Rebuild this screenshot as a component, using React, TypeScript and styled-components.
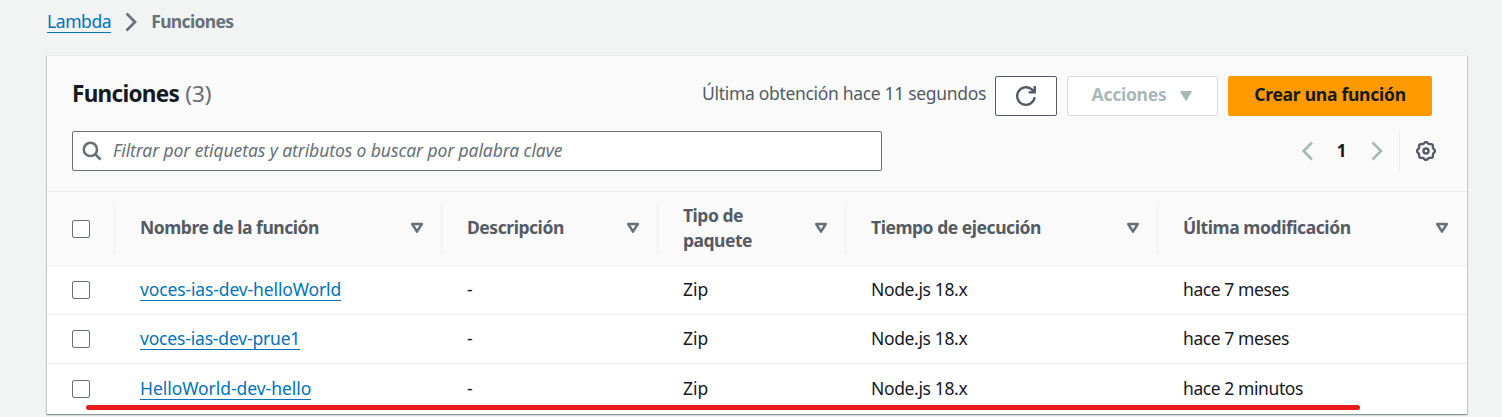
import React from 'react';
import styled, { createGlobalStyle } from 'styled-components';

const GlobalStyle = createGlobalStyle`
  *, *::before, *::after { box-sizing: border-box; }
  html, body { margin: 0; height: 417px; overflow: hidden; background: #f2f4f4; }
  body {
    font-family: "Noto Sans", "Open Sans", sans-serif;
    font-size: 17.5px;
    line-height: 25px;
    color: #16191f;
  }
  svg { display: block; flex: none; }
`;

const Page = styled.main`
  height: 417px;
  padding: 9px 35px 0 47px;
`;

const Breadcrumbs = styled.nav`
  display: flex;
  align-items: center;
  height: 25px;
  color: #687078;
`;

const Link = styled.a<{ $track?: number }>`
  display: inline-block;
  height: 23px;
  line-height: 23px;
  color: #0073bb;
  text-decoration: none;
  border-bottom: 1px solid #0073bb;
  letter-spacing: ${(p) => p.$track ?? 0}px;
  white-space: nowrap;
`;

const CrumbChevron = styled.svg`
  margin: 0 14px 0 14px;
`;

const Current = styled.span`
  font-weight: 700;
  letter-spacing: -0.65px;
`;

const Panel = styled.section`
  position: relative;
  margin-top: 21px;
  height: 359px;
  background: #fff;
  border-top: 1px solid #eaeded;
  box-shadow: 0 1px 0 0 #879596, 0 1px 1px 0 rgba(0, 28, 36, 0.3), 1px 1px 1px 0 rgba(0, 28, 36, 0.15),
    -1px 1px 1px 0 rgba(0, 28, 36, 0.15);
`;

const PanelHeader = styled.header`
  height: 135px;
  padding: 20px 35px 0 25px;
  background: #fafafa;
`;

const TitleRow = styled.div`
  display: flex;
  align-items: center;
  height: 40px;
`;

const Title = styled.h1`
  flex: 1;
  margin: 0 0 5px;
  font-size: 22.5px;
  line-height: 30px;
  font-weight: 700;
  letter-spacing: -0.7px;
`;

const Count = styled.span`
  font-weight: 400;
  margin-left: 1px;
  letter-spacing: 0;
  color: #687078;
`;

const Updated = styled.span`
  margin: 0 9px 5px 0;
  color: #545b64;
  letter-spacing: -0.32px;
`;

const Actions = styled.div`
  display: flex;
  gap: 10px;
`;

const Button = styled.button<{ $kind?: 'primary' | 'disabled'; $width: number }>`
  display: flex;
  align-items: center;
  justify-content: center;
  gap: 13px;
  width: ${(p) => p.$width}px;
  height: 40px;
  padding: 0;
  font: 700 17.5px/25px "Noto Sans", "Open Sans", sans-serif;
  letter-spacing: -0.25px;
  border-radius: 2px;
  border: 1px solid
    ${(p) => (p.$kind === 'primary' ? '#ff9900' : p.$kind === 'disabled' ? '#d5dbdb' : '#545b64')};
  background: ${(p) => (p.$kind === 'primary' ? '#ff9900' : '#fff')};
  color: ${(p) =>
    p.$kind === 'primary' ? '#16191f' : p.$kind === 'disabled' ? '#aab7b8' : '#545b64'};
`;

const ButtonLabel = styled.span`
  padding-bottom: 3px;
`;

const FilterRow = styled.div`
  display: flex;
  align-items: center;
  justify-content: space-between;
  margin-top: 15px;
  height: 40px;
`;

const Search = styled.label`
  display: flex;
  align-items: center;
  gap: 11px;
  width: 810px;
  height: 40px;
  padding: 0 9px;
  background: #fff;
  border: 1px solid #687078;
  border-radius: 2px;
  color: #687078;
`;

const Placeholder = styled.span`
  font-style: italic;
  letter-spacing: -0.09px;
  padding-bottom: 1px;
`;

const Pagination = styled.div`
  display: flex;
  align-items: center;
  margin-right: -4px;
  color: #aab7b8;
`;

const PageNumber = styled.span`
  width: 57px;
  padding: 0 2px 2px 0;
  text-align: center;
  font-weight: 700;
  font-size: 17px;
  color: #16191f;
`;

const Preferences = styled.div`
  display: flex;
  align-items: center;
  height: 39px;
  margin-left: 16px;
  padding-left: 16px;
  border-left: 1px solid #eaeded;
  color: #545b64;
`;

const Columns = styled.div`
  display: grid;
  grid-template-columns: 68px 327px 216px 188px 312px 309px;
  align-items: center;
`;

const HeadRow = styled(Columns)`
  height: 75px;
  background: #fafafa;
  border-top: 1px solid #eaeded;
  border-bottom: 1px solid #eaeded;
`;

const HeadCell = styled.div<{ $last?: boolean; $track?: number }>`
  display: flex;
  align-items: center;
  justify-content: space-between;
  height: 50px;
  padding: 0 ${(p) => (p.$last ? 18 : 17)}px 2px 25px;
  border-right: ${(p) => (p.$last ? 'none' : '1px solid #eaeded')};
  font-weight: 700;
  color: #545b64;
  letter-spacing: ${(p) => p.$track ?? 0}px;
`;

const CheckCell = styled.div`
  display: flex;
  align-items: center;
  height: 50px;
  border-right: 1px solid #eaeded;
`;

const BodyRow = styled(Columns)<{ $height: number }>`
  height: ${(p) => p.$height}px;
  border-bottom: 1px solid #eaeded;

  &[data-last='true'] { border-bottom: none; }
`;

const Cell = styled.div<{ $track?: number }>`
  padding: 0 0 2px 25px;
  letter-spacing: ${(p) => p.$track ?? 0}px;
  white-space: nowrap;
`;

const Checkbox = styled.span`
  display: block;
  width: 18px;
  height: 18px;
  margin-left: 25px;
  background: #fff;
  border: 1px solid #687078;
  border-radius: 2px;
`;

const Underline = styled.div`
  position: absolute;
  left: 39px;
  top: 349px;
  width: 1274px;
  height: 5px;
  border-radius: 3px;
  background: #e71a1c;
`;

const SortIcon = () => (
  <svg width="14" height="12" viewBox="0 0 14 12">
    <path d="M2.2 2h9.6L7 9.6z" fill="none" stroke="#687078" strokeWidth="2.5" strokeLinejoin="round" />
  </svg>
);

const CaretIcon = () => (
  <svg width="14" height="12" viewBox="0 0 14 12">
    <path d="M1.5 1.5h11L7 10.5z" fill="currentColor" stroke="currentColor" strokeLinejoin="round" />
  </svg>
);

const PageChevron = ({ left = false }: { left?: boolean }) => (
  <svg width="12" height="20" viewBox="0 0 12 20" fill="none" stroke="currentColor" strokeWidth="2.6">
    <path d={left ? 'M10 1.5L1.5 10l8.5 8.5' : 'M1.5 1.5L10 10l-8.5 8.5'} />
  </svg>
);

const SearchIcon = () => (
  <svg width="20" height="20" viewBox="0 0 20 20" fill="none" stroke="currentColor" strokeWidth="2.6">
    <circle cx="8.4" cy="8.4" r="6.6" />
    <path d="M13 13l5.6 5.6" />
  </svg>
);

const RefreshIcon = () => (
  <svg width="20" height="20" viewBox="0 0 20 20" fill="none" stroke="currentColor" strokeWidth="2.4">
    <path d="M18.7 11.2a8.8 8.8 0 1 1-2.9-7.8l2.2 2.2" />
    <path d="M20 0v7.4h-7.4V5.6L15.6 5l2-2V0z" fill="currentColor" stroke="none" />
  </svg>
);

const gearOutline =
  Array.from({ length: 96 }, (_, i) => {
    const t = (i / 96) * Math.PI * 2;
    const r = 8.3 + 0.7 * Math.cos(8 * t);
    return `${i ? 'L' : 'M'}${(10 + r * Math.cos(t)).toFixed(2)} ${(10 + r * Math.sin(t)).toFixed(2)}`;
  }).join('') + 'z';

const GearIcon = () => (
  <svg width="20" height="20" viewBox="0 0 20 20" fill="none" stroke="currentColor" strokeWidth="2.4">
    <path d={gearOutline} />
    <circle cx="10" cy="10" r="2.5" />
  </svg>
);

const headings = [
  { label: 'Nombre de la función', track: -0.46 },
  { label: 'Descripción', track: -0.45 },
  { label: 'Tipo de paquete', track: -0.5 },
  { label: 'Tiempo de ejecución', track: -0.46 },
  { label: 'Última modificación', track: -0.43 },
];

const functions = [
  { name: 'voces-ias-dev-helloWorld', track: -0.13, modified: 'hace 7 meses', height: 49 },
  { name: 'voces-ias-dev-prue1', track: -0.18, modified: 'hace 7 meses', height: 49 },
  { name: 'HelloWorld-dev-hello', track: -0.05, modified: 'hace 2 minutos', height: 50 },
];

export default function App() {
  return (
    <Page>
      <GlobalStyle />
      <Breadcrumbs>
        <Link $track={-0.42}>Lambda</Link>
        <CrumbChevron width="12" height="20" viewBox="0 0 12 20" fill="none" stroke="currentColor" strokeWidth="2.7">
          <path d="M1.5 1.5L10 10l-8.5 8.5" />
        </CrumbChevron>
        <Current>Funciones</Current>
      </Breadcrumbs>
      <Panel>
        <PanelHeader>
          <TitleRow>
            <Title>
              Funciones <Count>(3)</Count>
            </Title>
            <Updated>Última obtención hace 11 segundos</Updated>
            <Actions>
              <Button $width={62} aria-label="Actualizar">
                <RefreshIcon />
              </Button>
              <Button $width={151} $kind="disabled">
                <ButtonLabel>Acciones</ButtonLabel>
                <CaretIcon />
              </Button>
              <Button $width={204} $kind="primary">
                <ButtonLabel>Crear una función</ButtonLabel>
              </Button>
            </Actions>
          </TitleRow>
          <FilterRow>
            <Search>
              <SearchIcon />
              <Placeholder>Filtrar por etiquetas y atributos o buscar por palabra clave</Placeholder>
            </Search>
            <Pagination>
              <PageChevron left />
              <PageNumber>1</PageNumber>
              <PageChevron />
              <Preferences>
                <GearIcon />
              </Preferences>
            </Pagination>
          </FilterRow>
        </PanelHeader>
        <HeadRow>
          <CheckCell>
            <Checkbox />
          </CheckCell>
          {headings.map((h, i) => (
            <HeadCell key={h.label} $track={h.track} $last={i === headings.length - 1}>
              {h.label}
              <SortIcon />
            </HeadCell>
          ))}
        </HeadRow>
        {functions.map((f, i) => (
          <BodyRow key={f.name} $height={f.height} data-last={i === functions.length - 1}>
            <Checkbox />
            <Cell>
              <Link $track={f.track}>{f.name}</Link>
            </Cell>
            <Cell>-</Cell>
            <Cell>Zip</Cell>
            <Cell $track={-0.36}>Node.js 18.x</Cell>
            <Cell $track={-0.42}>{f.modified}</Cell>
          </BodyRow>
        ))}
        <Underline />
      </Panel>
    </Page>
  );
}
